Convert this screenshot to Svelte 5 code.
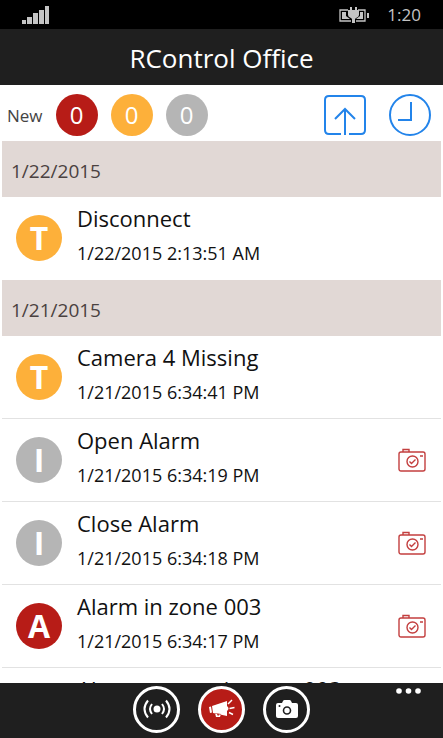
<script lang="ts">
    type Kind = "alarm" | "trouble" | "info";

    interface LogEvent {
        kind: Kind;
        title: string;
        time: string;
        photo?: boolean;
    }

    const letters: Record<Kind, string> = { alarm: "A", trouble: "T", info: "I" };

    let counters: { kind: Kind; count: number }[] = [
        { kind: "alarm", count: 0 },
        { kind: "trouble", count: 0 },
        { kind: "info", count: 0 },
    ];

    let days: { date: string; events: LogEvent[] }[] = [
        {
            date: "1/22/2015",
            events: [{ kind: "trouble", title: "Disconnect", time: "1/22/2015 2:13:51 AM" }],
        },
        {
            date: "1/21/2015",
            events: [
                { kind: "trouble", title: "Camera 4 Missing", time: "1/21/2015 6:34:41 PM" },
                { kind: "info", title: "Open Alarm", time: "1/21/2015 6:34:19 PM", photo: true },
                { kind: "info", title: "Close Alarm", time: "1/21/2015 6:34:18 PM", photo: true },
                { kind: "alarm", title: "Alarm in zone 003", time: "1/21/2015 6:34:17 PM", photo: true },
                { kind: "alarm", title: "Alarm restore in zone 003", time: "1/21/2015 6:34:16 PM" },
            ],
        },
    ];

    let tab = "events";
    let list: HTMLElement;
</script>

<div class="app">
    <div class="status">
        <svg width="28" height="18" viewBox="0 0 28 18" fill="#c4c4c4" aria-hidden="true">
            <path d="M0 14h4v4H0zM5 11h5v7H5zM11 7h5v11h-5zM17 4h5v14h-5zM23 0h4v18h-4z" />
        </svg>
        <div class="status-right">
            <svg width="30" height="18" viewBox="0 0 30 18" aria-hidden="true">
                <path d="M9 4H1v11h11M19 4h7v11h-9" fill="none" stroke="#c4c4c4" stroke-width="1.3" />
                <path d="M3 6h4v4l4 3H3zM24 6h-3v4l-4 3h7zM28 7h2v5h-2z" fill="#c4c4c4" />
                <path d="M11 1h2v3h3V1h2v3h2v5q0 2-3 3l-1 1v4h-3v-4l-1-1q-3-1-3-3V4h2z" fill="#c4c4c4" />
            </svg>
            <span>1:20</span>
        </div>
    </div>

    <header><h1>RControl Office</h1></header>

    <div class="toolbar">
        <span class="new">New</span>
        {#each counters as c}
            <span class="counter {c.kind}">{c.count}</span>
        {/each}
        <div class="tools">
            <button type="button" aria-label="Scroll to top" on:click={() => list.scrollTo({ top: 0 })}>
                <svg width="42" height="40" viewBox="0 0 42 40" fill="none" stroke="#2384ea" stroke-width="2">
                    <path d="M17 39H5q-4 0-4-4V5q0-4 4-4h32q4 0 4 4v30q0 4-4 4H25M21 40V14M11 24l10-10 10 10" />
                </svg>
            </button>
            <button type="button" aria-label="History">
                <svg width="42" height="42" viewBox="0 0 42 42" fill="none" stroke="#2384ea" stroke-width="2">
                    <circle cx="21" cy="21" r="20" />
                    <path d="M22 8v18H9" />
                </svg>
            </button>
        </div>
    </div>

    <main bind:this={list}>
        {#each days as day}
            <h2>{day.date}</h2>
            <ul>
                {#each day.events as ev}
                    <li>
                        <span class="badge {ev.kind}">{letters[ev.kind]}</span>
                        <div class="info-text">
                            <div class="title">{ev.title}</div>
                            <div class="time">{ev.time}</div>
                        </div>
                        {#if ev.photo}
                            <button type="button" class="photo" aria-label="View photos">
                                <svg width="28" height="24" viewBox="0 0 28 24" fill="none" stroke="#c33f3f" stroke-width="1.4">
                                    <rect x="1" y="4" width="26" height="19" rx="2" />
                                    <path d="M5 4V1.500h6V4M22 8h3M11.500 13.500l2 2 4-4" />
                                    <circle cx="14.500" cy="13.500" r="5.500" />
                                </svg>
                            </button>
                        {/if}
                    </li>
                {/each}
            </ul>
        {/each}
    </main>

    <nav>
        <button type="button" class="tab" class:active={tab === "devices"} aria-label="Devices" on:click={() => (tab = "devices")}>
            <svg width="28" height="20" viewBox="0 0 28 20" fill="none" stroke="#fff" stroke-width="2">
                <circle cx="14" cy="10" r="3.5" fill="#fff" stroke="none" />
                <path d="M9 5q-4 5 0 10M19 5q4 5 0 10M5 1.500q-7 8.500 0 17M23 1.500q7 8.500 0 17" />
            </svg>
        </button>
        <button type="button" class="tab" class:active={tab === "events"} aria-label="Events" on:click={() => (tab = "events")}>
            <svg width="28" height="20" viewBox="0 0 28 20" fill="#fff">
                <path d="M1 8l2-.5 1 6-2 .5zM4 7L19 2v15L5 14zM7 14l1 4h4l1-3z" />
                <path d="M9 15l.5 1.500h1.500l.5-1.200z" fill="#b71c17" />
                <path d="M20 5l4-4M21.500 9.500l5-1M21 13.500l4 2" stroke="#fff" stroke-width="1.5" />
                <path d="M19 7q3 2.500 0 5z" />
            </svg>
        </button>
        <button type="button" class="tab" class:active={tab === "cameras"} aria-label="Cameras" on:click={() => (tab = "cameras")}>
            <svg width="22" height="18" viewBox="0 0 22 18">
                <path d="M2 3h4l1-2q.5-1 1.500-1h5q1 0 1.500 1l1 2h4q2 0 2 2v11q0 2-2 2H2q-2 0-2-2V5q0-2 2-2z" fill="#fff" />
                <circle cx="11" cy="10.5" r="3.5" fill="#fff" stroke="#1f1f1f" stroke-width="1.6" />
                <circle cx="3.5" cy="6" r="1" fill="#1f1f1f" />
            </svg>
        </button>
        <button type="button" class="more" aria-label="More">
            <svg width="25" height="6" viewBox="0 0 25 6" fill="#fff">
                <circle cx="3" cy="3" r="2.8" />
                <circle cx="12.5" cy="3" r="2.8" />
                <circle cx="22" cy="3" r="2.8" />
            </svg>
        </button>
    </nav>
</div>

<style>
    :global(body) { margin: 0; background: #fff; }
    .app { display: flex; flex-direction: column; height: 100vh; overflow: hidden; color: #111; font-family: "Segoe UI", "Open Sans", "Noto Sans", sans-serif; }
    button { display: flex; align-items: center; justify-content: center; padding: 0; border: 0; background: none; cursor: pointer; }
    svg { display: block; }

    .status { display: flex; flex: none; align-items: center; justify-content: space-between; box-sizing: border-box; height: 29px; padding: 0 22px; background: #000; color: #c4c4c4; }
    .status-right { display: flex; align-items: center; gap: 18px; font-size: 17px; line-height: 30px; }

    header { display: flex; flex: none; align-items: center; justify-content: center; box-sizing: border-box; height: 56px; padding-top: 2px; background: #1f1f1f; color: #fff; }
    h1 { margin: 0; font-size: 26px; font-weight: 400; line-height: 36px; }

    .toolbar { display: flex; flex: none; align-items: center; gap: 13px; box-sizing: border-box; height: 56px; padding: 4px 12px 0 7px; }
    .new { font-size: 17px; color: #444; }
    .counter { display: flex; align-items: center; justify-content: center; width: 42px; height: 42px; border-radius: 50%; color: #fff; font-size: 24px; line-height: 42px; }
    .tools { display: flex; align-items: center; gap: 23px; margin-left: auto; }

    .alarm { background: #b71c17; }
    .trouble { background: #fdb03a; }
    .info { background: #b5b5b5; }

    main { flex: 1; min-height: 0; padding: 0 2px; overflow-y: auto; scrollbar-width: none; }
    h2 { margin: 0; padding: 4px 9px 0; background: #e1d8d5; color: #4a4140; font-size: 19px; font-weight: 400; line-height: 52px; }
    ul { margin: 0; padding: 0; list-style: none; }
    li { display: flex; align-items: center; gap: 15px; box-sizing: border-box; height: 83px; padding: 0 15px 0 14px; border-bottom: 1px solid #e2e2e2; }
    li:last-child { border-bottom-color: transparent; }
    .badge { display: flex; flex: none; align-items: center; justify-content: center; width: 46px; height: 46px; border-radius: 50%; color: #fff; font-size: 32px; font-weight: 700; line-height: 46px; }
    .info-text { flex: 1; min-width: 0; padding-bottom: 2px; white-space: nowrap; }
    .title { font-size: 22px; line-height: 32px; }
    .time { font-size: 18px; line-height: 38px; }

    nav { position: relative; display: flex; flex: none; align-items: center; justify-content: center; gap: 18px; box-sizing: border-box; height: 55px; padding-bottom: 3px; background: #1f1f1f; }
    .tab { box-sizing: border-box; width: 47px; height: 47px; border: 3px solid #fff; border-radius: 50%; }
    .tab.active { background: #b71c17; }
    .more { position: absolute; top: 5px; right: 22px; }
</style>
